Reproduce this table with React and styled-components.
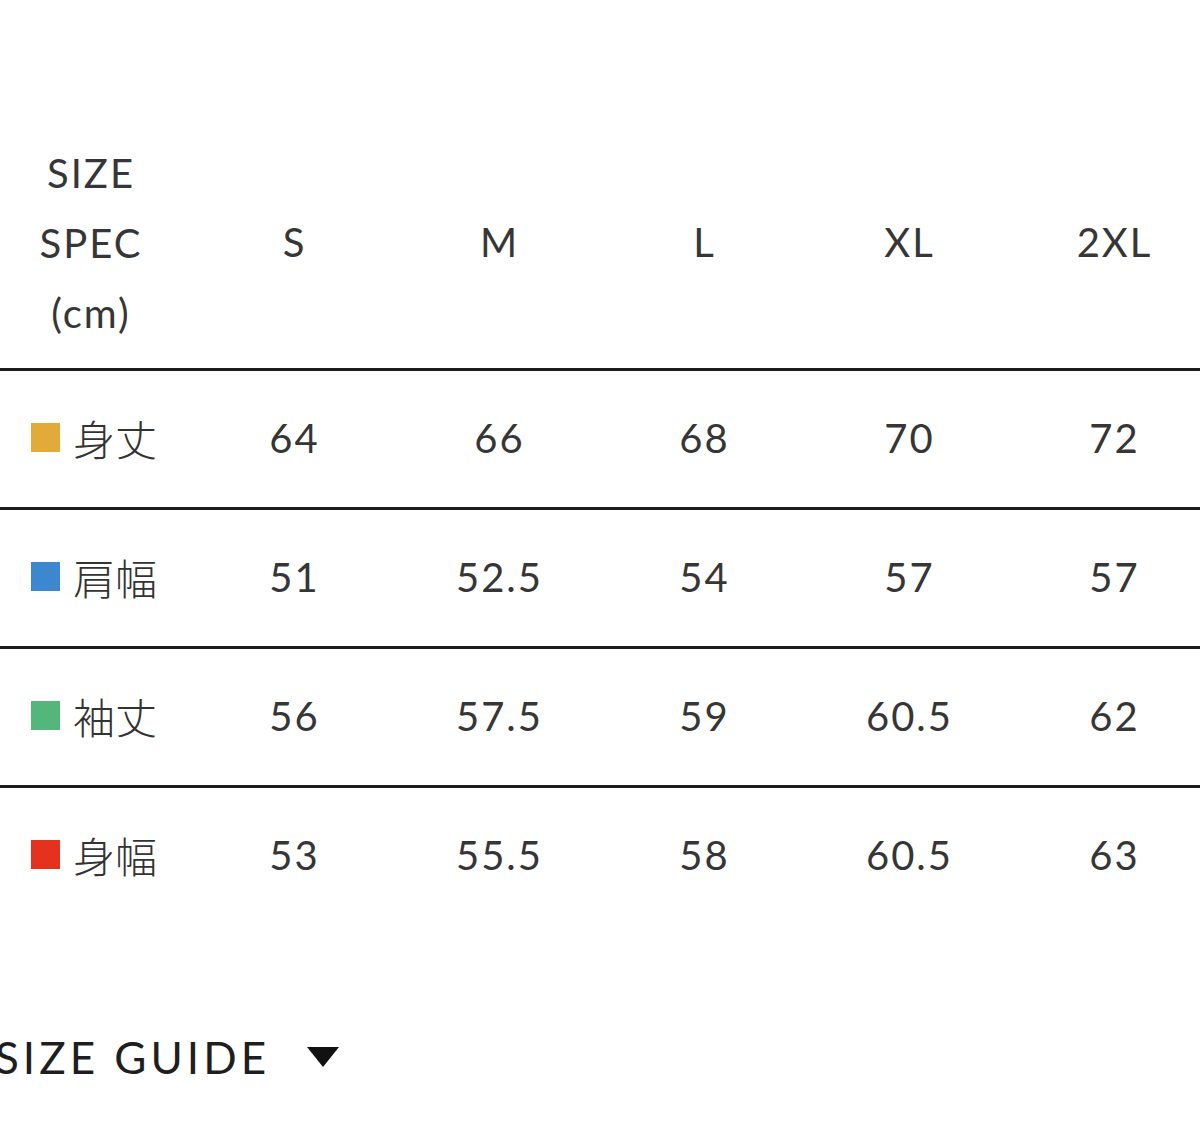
import React from 'react';
import styled, { createGlobalStyle } from 'styled-components';

const sizes = ['S', 'M', 'L', 'XL', '2XL'];

const rows = [
    { label: '身丈', color: '#e2aa38', values: ['64', '66', '68', '70', '72'] },
    { label: '肩幅', color: '#3d87cf', values: ['51', '52.5', '54', '57', '57'] },
    { label: '袖丈', color: '#55b67c', values: ['56', '57.5', '59', '60.5', '62'] },
    { label: '身幅', color: '#e4321f', values: ['53', '55.5', '58', '60.5', '63'] },
];

const App = () => {
    return (
        <>
            <GlobalStyle />
            <Pagina>
                <Tabla>
                    <Cabecera>
                        <TituloSpec>
                            <span>SIZE</span>
                            <span>SPEC</span>
                            <span>(cm)</span>
                        </TituloSpec>
                        {sizes.map((s) => (
                            <Celda key={s}>{s}</Celda>
                        ))}
                    </Cabecera>
                    {rows.map((r) => (
                        <Fila key={r.label}>
                            <Etiqueta>
                                <Cuadro color={r.color} />
                                {r.label}
                            </Etiqueta>
                            {r.values.map((v, i) => (
                                <Celda key={i}>{v}</Celda>
                            ))}
                        </Fila>
                    ))}
                </Tabla>
                <Guia>
                    SIZE GUIDE
                    <svg width="34" height="22" viewBox="0 0 34 22">
                        <polygon points="1,1 33,1 17,21" fill="#111" />
                    </svg>
                </Guia>
            </Pagina>
        </>
    );
};

const GlobalStyle = createGlobalStyle`
    body {
        margin: 0;
        background: #fff;
        overflow: hidden;
        font-family: Lato, "Noto Sans CJK JP", sans-serif;
        font-weight: 400;
        color: #363636;
    }
`

const Pagina = styled.div`
    width: 1200px;
    height: 1148px;
    padding-top: 138px;
    box-sizing: border-box;
    overflow: hidden;
`

const Tabla = styled.div`
    display: flex;
    flex-direction: column;
`

const Cabecera = styled.div`
    display: grid;
    grid-template-columns: 192px repeat(5, 205px);
    align-items: center;
    padding-bottom: 20px;
    font-size: 40px;
    letter-spacing: 2px;
`

const TituloSpec = styled.div`
    display: flex;
    flex-direction: column;
    align-items: center;
    line-height: 70px;
    padding-right: 10px;
`

const Fila = styled.div`
    display: grid;
    grid-template-columns: 192px repeat(5, 205px);
    align-items: center;
    height: 136px;
    border-top: 3px solid #1c1c1c;
    font-size: 40px;
    letter-spacing: 2px;
`

const Celda = styled.div`
    text-align: center;
    padding-bottom: 3px;
`

const Etiqueta = styled.div`
    display: flex;
    align-items: center;
    gap: 13px;
    padding-left: 31px;
    padding-bottom: 3px;
    font-family: "Noto Sans CJK JP", sans-serif;
    font-weight: 300;
    font-size: 42px;
    letter-spacing: 0;
    color: #333;
`

const Cuadro = styled.span`
    width: 29px;
    height: 29px;
    background: ${(p) => p.color};
    flex-shrink: 0;
`

const Guia = styled.div`
    display: flex;
    align-items: center;
    gap: 36px;
    margin-top: 103px;
    margin-left: -5px;
    line-height: 60px;
    font-size: 44px;
    letter-spacing: 4px;
    color: #1e1e1e;
`

export default App;
